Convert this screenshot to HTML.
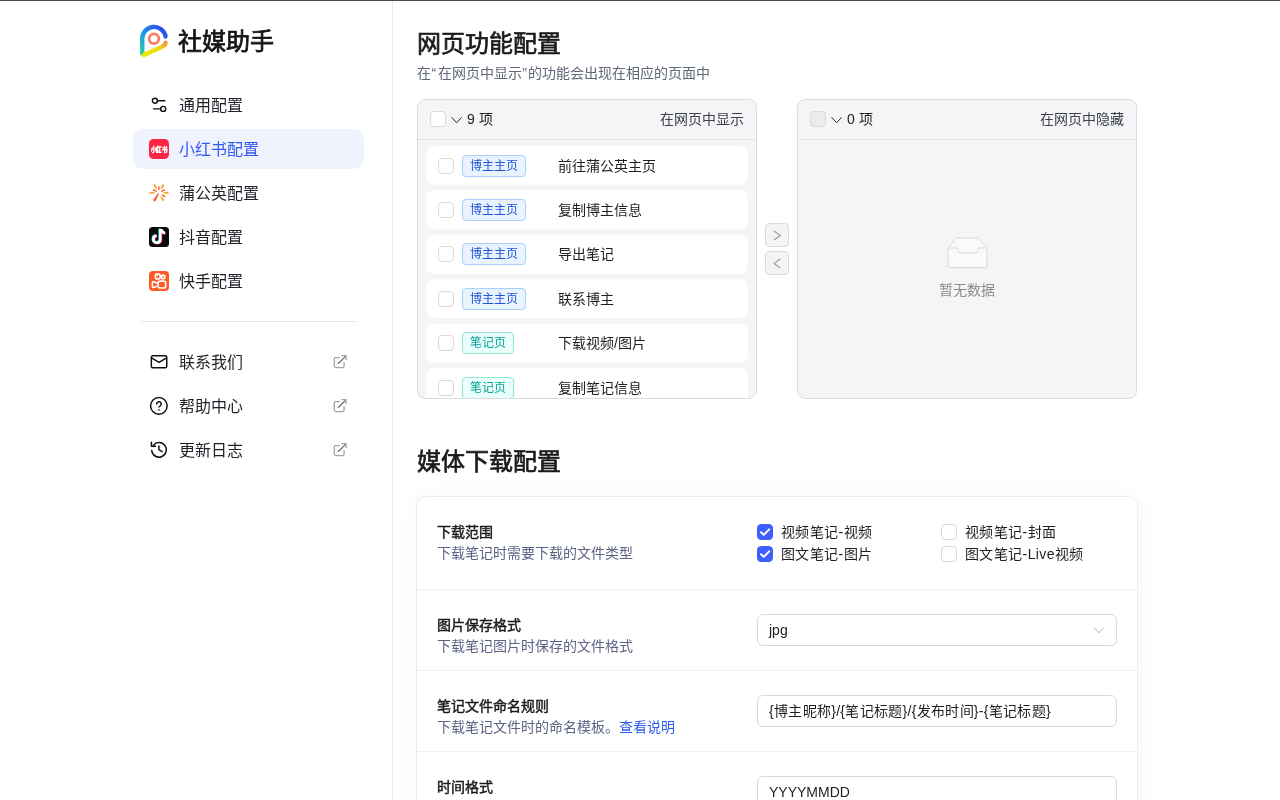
<!DOCTYPE html>
<html lang="zh-CN">
<head>
<meta charset="utf-8">
<style>
*{box-sizing:border-box;margin:0;padding:0}
html,body{width:1280px;height:800px;overflow:hidden;background:#fff}
body{font-family:"Liberation Sans",sans-serif;color:#1f2329;position:relative}
.abs{position:absolute}
.topline{position:absolute;left:0;top:0;width:1280px;height:1px;background:#4f4f4f;z-index:10}
.sidebar{position:absolute;left:0;top:0;width:392px;height:800px;background:#fff}
.vline{position:absolute;left:392px;top:1px;width:1px;height:799px;background:#e6e7eb}
.logo-text{position:absolute;left:178px;top:25px;font-size:24px;font-weight:400;-webkit-text-stroke:0.75px #141414;line-height:34px;color:#141414;letter-spacing:0}
.nav{position:absolute;left:133px;width:231px;height:40px;border-radius:10px}
.nav .t{position:absolute;left:46px;top:1px;line-height:40px;font-size:16px;color:#1f2329}
.nav.active{background:#eef3fe}
.nav.active .t{color:#3358f0}
.nav svg{position:absolute;left:16px;top:10px}
.divider{position:absolute;left:141px;top:321px;width:215px;height:1px;background:#e5e6eb}
.nav svg.ext{position:absolute;left:195px;top:10px}

.h1{position:absolute;left:417px;font-size:24px;font-weight:400;-webkit-text-stroke:0.7px #1b1b1b;line-height:32px;color:#1b1b1b}
.sub{position:absolute;font-size:14px;line-height:22px;color:#5f6876}
.panel{position:absolute;top:99px;width:340px;height:300px;border:1px solid #dcdcdf;border-radius:8px;background:#f5f5f7;overflow:hidden}
.phead{position:absolute;left:0;top:0;width:338px;height:40px;border-bottom:1px solid #e3e3e6}
.cb{position:absolute;width:16px;height:16px;border:1px solid #d9d9d9;border-radius:4px;background:#fff}
.cb.dis{background:#ececee}
.cnt{position:absolute;top:8px;font-size:14px;line-height:22px;color:#1f1f1f}
.ptitle{position:absolute;right:12px;top:8px;font-size:14px;line-height:22px;color:#3a404e}
.plist{position:absolute;left:0;top:40px;width:338px;height:258px;overflow:hidden}
.item{position:absolute;left:8px;width:322px;height:39px;background:#fff;border-radius:8px}
.tag{position:absolute;left:36px;top:8.5px;height:22px;border:1px solid;border-radius:4px;font-size:12px;line-height:20px;text-align:center;white-space:nowrap}
.tag.b{background:#e8f3ff;border-color:#a9cffb;color:#2156d8;width:64px}
.tag.g{background:#e8fffb;border-color:#93e6d5;color:#0e9f98;width:52px}
.it{position:absolute;left:132px;top:8.5px;font-size:14px;line-height:22px;color:#1f1f1f}
.tbtn{position:absolute;left:765px;width:24px;height:24px;border:1px solid #dadada;border-radius:4px;background:#f4f4f5}
.tbtn svg{position:absolute;left:-1px;top:-1px}
.empty{position:absolute;left:0;width:338px;top:179px;text-align:center;font-size:14px;line-height:22px;color:#8c8c8c}
.card{position:absolute;left:416px;top:496px;width:722px;height:400px;background:#fff;border:1px solid #ebebee;border-radius:10px;box-shadow:0 0 22px rgba(0,0,0,0.04)}
.row{position:absolute;left:0;width:720px;height:80px}
.sep{position:absolute;left:0;width:720px;height:1px;background:#efeff1}
.lt{position:absolute;left:20px;font-size:14px;font-weight:400;-webkit-text-stroke:0.45px #1b1b1b;line-height:22px;color:#1b1b1b}
.ls{position:absolute;left:20px;font-size:14px;line-height:22px;color:#5d6385}
.ck{position:absolute;width:16px;height:16px;border:1px solid #d9d9d9;border-radius:4px;background:#fff}
.ck.on{background:#3e5ffb;border-color:#3e5ffb}
.ck svg{position:absolute;left:-1px;top:-1px}
.cl{position:absolute;font-size:14px;line-height:22px;color:#1f1f1f;letter-spacing:0.4px}
.inp{position:absolute;left:340px;width:360px;height:32px;border:1px solid #d9d9d9;border-radius:6px;padding-left:11px;font-size:14px;line-height:30px;color:#1f1f1f}
</style>
</head>
<body><div id="wrap" style="position:absolute;left:0;top:0;width:1280px;height:800px;will-change:transform">
<div class="topline"></div>
<div class="sidebar">
  <svg class="abs" style="left:135px;top:21px" width="40" height="40" viewBox="0 0 40 40">
    <defs>
      <linearGradient id="lg1" x1="30" y1="10" x2="6" y2="34" gradientUnits="userSpaceOnUse">
        <stop offset="0" stop-color="#2a4ee8"/>
        <stop offset="0.45" stop-color="#1e90ee"/>
        <stop offset="1" stop-color="#33d0a0"/>
      </linearGradient>
      <linearGradient id="lg2" x1="31" y1="22" x2="9" y2="34" gradientUnits="userSpaceOnUse">
        <stop offset="0" stop-color="#f59a3a"/>
        <stop offset="0.35" stop-color="#f0dc10"/>
        <stop offset="1" stop-color="#ece800"/>
      </linearGradient>
    </defs>
    <path d="M30.55 15.5 A11.75 11.75 0 0 0 7.25 17.75 L7.25 32.6" fill="none" stroke="url(#lg1)" stroke-width="4.4" stroke-linecap="round"/>
    <path d="M8.9 33.9 L26.6 25.9 Q30.6 24.1 30.6 21.6" fill="none" stroke="url(#lg2)" stroke-width="4.4" stroke-linecap="round"/>
    <circle cx="19" cy="17.8" r="4.85" fill="none" stroke="#f87c62" stroke-width="2.75"/>
  </svg>
  <div class="logo-text">社媒助手</div>

  <div class="nav" style="top:85px">
    <svg width="20" height="20" viewBox="0 0 20 20"><g fill="none" stroke="#111" stroke-width="1.4" stroke-linecap="round"><circle cx="5.9" cy="5.7" r="2.5"/><path d="M8.4 5.7H15.9"/><circle cx="14.2" cy="13.9" r="2.5"/><path d="M4.5 13.9H11.7"/></g></svg>
    <div class="t">通用配置</div>
  </div>
  <div class="nav active" style="top:129px">
    <svg width="20" height="20" viewBox="0 0 20 20"><rect x="0" y="0" width="20" height="20" rx="4.5" fill="#ff2442"/><text x="1.6" y="12.9" font-size="6.8" font-weight="900" fill="#fff" textLength="17" lengthAdjust="spacingAndGlyphs" stroke="#fff" stroke-width="0.25">小红书</text></svg>
    <div class="t">小红书配置</div>
  </div>
  <div class="nav" style="top:173px">
    <svg width="20" height="20" viewBox="0 0 20 20"><path d="M4.86 3.17 L7.08 6.09 A0.55 0.55 0 0 0 8.04 5.56 L6.77 2.13 A1.10 1.10 0 1 0 4.86 3.17 Z" fill="#f9a51c"/><path d="M9.00 4.05 L9.15 6.55 A0.75 0.75 0 0 0 10.65 6.55 L10.80 4.05 A0.90 0.90 0 1 0 9.00 4.05 Z" fill="#fa6f55"/><path d="M13.04 2.12 L11.87 5.36 A0.55 0.55 0 0 0 12.82 5.88 L14.94 3.16 A1.10 1.10 0 1 0 13.04 2.12 Z" fill="#f9a51c"/><path d="M4.65 8.08 L7.35 8.73 A0.50 0.50 0 0 0 7.71 7.81 L5.31 6.42 A0.90 0.90 0 1 0 4.65 8.08 Z" fill="#fb5a1e"/><path d="M14.59 6.43 L12.28 7.81 A0.50 0.50 0 0 0 12.66 8.73 L15.27 8.07 A0.90 0.90 0 1 0 14.59 6.43 Z" fill="#fb5a1e"/><path d="M1.57 10.84 L5.73 10.35 A0.55 0.55 0 0 0 5.73 9.25 L1.57 8.76 A1.05 1.05 0 1 0 1.57 10.84 Z" fill="#f9a51c"/><path d="M18.43 8.76 L14.37 9.25 A0.55 0.55 0 0 0 14.37 10.35 L18.43 10.84 A1.05 1.05 0 1 0 18.43 8.76 Z" fill="#f9a51c"/><path d="M6.68 17.69 L9.85 10.92 A0.55 0.55 0 0 0 8.90 10.37 L4.61 16.49 A1.20 1.20 0 1 0 6.68 17.69 Z" fill="#fb5a1e"/><path d="M15.50 12.42 L13.33 11.56 A0.55 0.55 0 0 0 12.80 12.51 L14.69 13.89 A0.85 0.85 0 1 0 15.50 12.42 Z" fill="#fb5a1e"/><path d="M14.97 16.31 L12.34 13.66 A0.50 0.50 0 0 0 11.55 14.25 L13.39 17.51 A1.00 1.00 0 1 0 14.97 16.31 Z" fill="#f9a51c"/></svg>
    <div class="t">蒲公英配置</div>
  </div>
  <div class="nav" style="top:217px">
    <svg width="20" height="20" viewBox="0 0 20 20"><rect x="0" y="0" width="20" height="20" rx="3.5" fill="#0a0a0a"/>
      <g fill="none" stroke-width="2.6">
        <g stroke="#25f4ee" transform="translate(-0.6,-0.5)"><path d="M11.3 1.9 V13.2 A3.5 3.5 0 1 1 7.6 8.8"/><path d="M12.4 2.4 Q13 5.6 16 6"/></g>
        <g stroke="#fe2c55" transform="translate(0.6,0.5)"><path d="M11.3 1.9 V13.2 A3.5 3.5 0 1 1 7.6 8.8"/><path d="M12.4 2.4 Q13 5.6 16 6"/></g>
        <g stroke="#fff"><path d="M11.3 1.9 V13.2 A3.5 3.5 0 1 1 7.6 8.8"/><path d="M12.4 2.4 Q13 5.6 16 6"/></g>
      </g>
    </svg>
    <div class="t">抖音配置</div>
  </div>
  <div class="nav" style="top:261px">
    <svg width="20" height="20" viewBox="0 0 20 20"><rect x="0" y="0" width="20" height="20" rx="4" fill="#ff5a22"/>
      <g fill="none" stroke="#fff" stroke-width="1.6" stroke-linejoin="round">
        <circle cx="8.75" cy="5.4" r="2.55"/><circle cx="14.1" cy="5.95" r="1.85"/>
        <rect x="9.1" y="10.1" width="7.6" height="6.9" rx="2.1"/>
        <path d="M9.1 12.3 L4.6 10.7 Q3.4 10.3 3.4 11.5 V15.6 Q3.4 16.9 4.6 16.4 L9.1 14.8"/>
      </g>
      <circle cx="14.1" cy="5.95" r="0.6" fill="#fff"/><path d="M7.9 5.5 A0.9 0.9 0 0 1 9.0 4.6" fill="none" stroke="#fff" stroke-width="0.9"/>
    </svg>
    <div class="t">快手配置</div>
  </div>
  <div class="divider"></div>
  <div class="nav" style="top:342px">
    <svg width="20" height="20" viewBox="0 0 20 20"><g fill="none" stroke="#111" stroke-width="1.5" stroke-linejoin="round"><rect x="2.35" y="3.8" width="15.4" height="12" rx="1.5"/><path d="M2.5 5.9 L10.05 10.4 L17.6 5.9"/></g></svg>
    <div class="t">联系我们</div>
    <svg class="ext" width="20" height="20" viewBox="0 0 20 20"><g fill="none" stroke="#a3a3a3" stroke-width="1.3" stroke-linecap="round"><path d="M11.2 5.7 H7.8 Q6.3 5.7 6.3 7.2 V14.1 Q6.3 15.6 7.8 15.6 H14.6 Q16.1 15.6 16.1 14.1 V10.5"/><path d="M10.4 11.4 L17.5 4.3" stroke="#5a5a5a" stroke-width="1.2"/><path d="M14 3.6 H18 V7.5"/></g></svg>
  </div>
  <div class="nav" style="top:386px">
    <svg width="20" height="20" viewBox="0 0 20 20"><g fill="none" stroke="#111" stroke-width="1.5" stroke-linecap="round"><circle cx="9.87" cy="9.85" r="8.3"/><path d="M7.7 8.05 A2.25 2.25 0 1 1 11.3 9.85 Q10 10.5 10 11.1"/></g><rect x="9.25" y="13.2" width="1.45" height="1.45" fill="#111"/></svg>
    <div class="t">帮助中心</div>
    <svg class="ext" width="20" height="20" viewBox="0 0 20 20"><g fill="none" stroke="#a3a3a3" stroke-width="1.3" stroke-linecap="round"><path d="M11.2 5.7 H7.8 Q6.3 5.7 6.3 7.2 V14.1 Q6.3 15.6 7.8 15.6 H14.6 Q16.1 15.6 16.1 14.1 V10.5"/><path d="M10.4 11.4 L17.5 4.3" stroke="#5a5a5a" stroke-width="1.2"/><path d="M14 3.6 H18 V7.5"/></g></svg>
  </div>
  <div class="nav" style="top:430px">
    <svg width="20" height="20" viewBox="0 0 20 20"><g fill="none" stroke="#111" stroke-width="1.5" stroke-linecap="round" stroke-linejoin="round"><path d="M4.4 5.2 A7.3 7.3 0 1 1 2.73 10.44"/><path d="M2.4 2.3 V6.3 H6.5"/><path d="M9.9 6.1 V9.6 L13.2 11.6"/></g></svg>
    <div class="t">更新日志</div>
    <svg class="ext" width="20" height="20" viewBox="0 0 20 20"><g fill="none" stroke="#a3a3a3" stroke-width="1.3" stroke-linecap="round"><path d="M11.2 5.7 H7.8 Q6.3 5.7 6.3 7.2 V14.1 Q6.3 15.6 7.8 15.6 H14.6 Q16.1 15.6 16.1 14.1 V10.5"/><path d="M10.4 11.4 L17.5 4.3" stroke="#5a5a5a" stroke-width="1.2"/><path d="M14 3.6 H18 V7.5"/></g></svg>
  </div>
</div>
<div class="vline"></div>

<div id="main">
  <div class="h1" style="top:27.75px">网页功能配置</div>
  <div class="sub" style="left:417px;top:62px">在<span style="margin:0 1.5px 0 0.5px">“</span>在网页中显示<span style="margin:0 1.5px 0 0.5px">”</span>的功能会出现在相应的页面中</div>

  <div class="panel" style="left:417px">
    <div class="phead">
      <div class="cb" style="left:12px;top:11px"></div>
      <svg class="abs" style="left:33px;top:16px" width="12" height="9" viewBox="0 0 12 9"><path d="M0.6 1.3 L5.6 6.8 L10.6 1.3" fill="none" stroke="#2a2a2a" stroke-width="1"/></svg>
      <div class="cnt" style="left:49px">9 项</div>
      <div class="ptitle">在网页中显示</div>
    </div>
    <div class="plist">
      <div class="item" style="top:6.00px"><div class="cb" style="left:12px;top:11.5px"></div><div class="tag b">博主主页</div><div class="it">前往蒲公英主页</div></div>
      <div class="item" style="top:50.42px"><div class="cb" style="left:12px;top:11.5px"></div><div class="tag b">博主主页</div><div class="it">复制博主信息</div></div>
      <div class="item" style="top:94.84px"><div class="cb" style="left:12px;top:11.5px"></div><div class="tag b">博主主页</div><div class="it">导出笔记</div></div>
      <div class="item" style="top:139.26px"><div class="cb" style="left:12px;top:11.5px"></div><div class="tag b">博主主页</div><div class="it">联系博主</div></div>
      <div class="item" style="top:183.68px"><div class="cb" style="left:12px;top:11.5px"></div><div class="tag g">笔记页</div><div class="it">下载视频/图片</div></div>
      <div class="item" style="top:228.10px"><div class="cb" style="left:12px;top:11.5px"></div><div class="tag g">笔记页</div><div class="it">复制笔记信息</div></div>
      <div class="item" style="top:272.52px"><div class="cb" style="left:12px;top:11.5px"></div><div class="tag g">笔记页</div><div class="it">复制笔记链接</div></div>
      
    </div>
  </div>

  <div class="tbtn" style="top:223px"><svg width="24" height="24" viewBox="0 0 24 24"><path d="M9 8 L15.3 12.5 L9 17" fill="none" stroke="#9a9a9a" stroke-width="1.05"/></svg></div>
  <div class="tbtn" style="top:251px"><svg width="24" height="24" viewBox="0 0 24 24"><path d="M15.3 8 L9 12.5 L15.3 17" fill="none" stroke="#9a9a9a" stroke-width="1.05"/></svg></div>

  <div class="panel" style="left:797px">
    <div class="phead">
      <div class="cb dis" style="left:12px;top:11px"></div>
      <svg class="abs" style="left:33px;top:16px" width="12" height="9" viewBox="0 0 12 9"><path d="M0.6 1.3 L5.6 6.8 L10.6 1.3" fill="none" stroke="#2a2a2a" stroke-width="1"/></svg>
      <div class="cnt" style="left:49px">0 项</div>
      <div class="ptitle">在网页中隐藏</div>
    </div>
    <svg class="abs" style="left:149px;top:137px" width="42" height="33" viewBox="0 0 42 33">
      <ellipse cx="21" cy="30.5" rx="20" ry="2.2" fill="#f0f0f2"/>
      <path d="M1 11 L9.5 1 H31.5 L40 11 V29 Q40 30.5 38.5 30.5 H2.5 Q1 30.5 1 29 Z" fill="#fafafa" stroke="#d9d9d9" stroke-width="1"/>
      <path d="M1 11 H10.5 Q11 16 13 16 H29 Q31 16 31.5 11 H40" fill="none" stroke="#d9d9d9" stroke-width="1"/>
    </svg>
    <div class="empty">暂无数据</div>
  </div>

  <div class="h1" style="top:446px">媒体下载配置</div>

  <div class="card">
    <div class="row" style="top:0;height:92px">
      <div class="lt" style="top:24px">下载范围</div>
      <div class="ls" style="top:44.5px">下载笔记时需要下载的文件类型</div>
      <div class="ck on" style="left:340px;top:27px"><svg width="16" height="16" viewBox="0 0 16 16"><path d="M4 8.2 L6.8 10.9 L12.2 5.4" fill="none" stroke="#fff" stroke-width="2" stroke-linecap="round" stroke-linejoin="round"/></svg></div>
      <div class="cl" style="left:364px;top:24px">视频笔记-视频</div>
      <div class="ck on" style="left:340px;top:49px"><svg width="16" height="16" viewBox="0 0 16 16"><path d="M4 8.2 L6.8 10.9 L12.2 5.4" fill="none" stroke="#fff" stroke-width="2" stroke-linecap="round" stroke-linejoin="round"/></svg></div>
      <div class="cl" style="left:364px;top:46px">图文笔记-图片</div>
      <div class="ck" style="left:524px;top:27px"></div>
      <div class="cl" style="left:548px;top:24px">视频笔记-封面</div>
      <div class="ck" style="left:524px;top:49px"></div>
      <div class="cl" style="left:548px;top:46px">图文笔记-Live视频</div>
    </div>
    <div class="sep" style="top:92px"></div>
    <div class="row" style="top:93px">
      <div class="lt" style="top:24px">图片保存格式</div>
      <div class="ls" style="top:44.5px">下载笔记图片时保存的文件格式</div>
      <div class="inp" style="top:24px">jpg<svg class="abs" style="right:11px;top:11px" width="12" height="9" viewBox="0 0 12 9"><path d="M1 1.5 L6 6.8 L11 1.5" fill="none" stroke="#b4b4b4" stroke-width="1"/></svg></div>
    </div>
    <div class="sep" style="top:173px"></div>
    <div class="row" style="top:174px">
      <div class="lt" style="top:24px">笔记文件命名规则</div>
      <div class="ls" style="top:44.5px">下载笔记文件时的命名模板。<span style="color:#2c5cf2">查看说明</span></div>
      <div class="inp" style="top:24px;letter-spacing:0.3px">{博主昵称}/{笔记标题}/{发布时间}-{笔记标题}</div>
    </div>
    <div class="sep" style="top:254px"></div>
    <div class="row" style="top:255px">
      <div class="lt" style="top:24px">时间格式</div>
      <div class="inp" style="top:24px">YYYYMMDD</div>
    </div>
  </div>
</div>
</div></body>
</html>
